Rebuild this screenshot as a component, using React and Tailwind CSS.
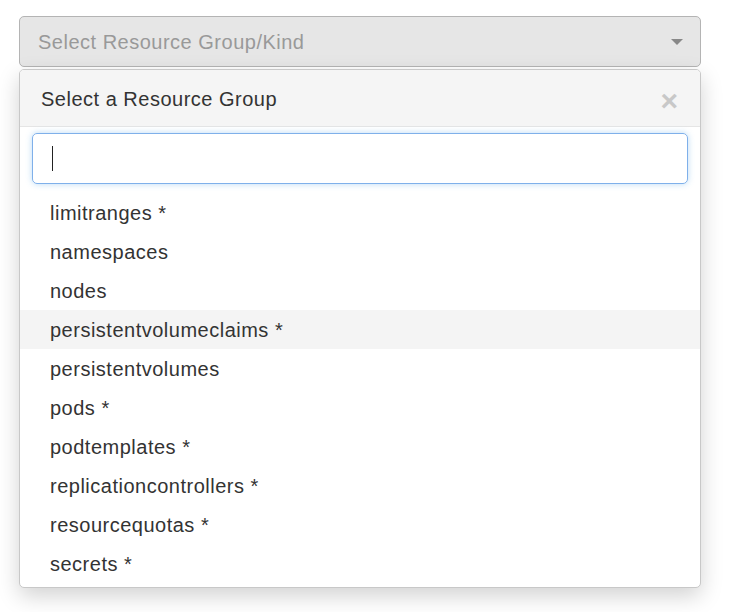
const KINDS = [
  'limitranges *',
  'namespaces',
  'nodes',
  'persistentvolumeclaims *',
  'persistentvolumes',
  'pods *',
  'podtemplates *',
  'replicationcontrollers *',
  'resourcequotas *',
  'secrets *',
]

export default function App() {
  return (
    <div className="min-h-[612px] bg-white pt-[16px] pl-[19px] w-[701px] font-['Liberation_Sans',Arial,sans-serif]">
      {/* Select trigger */}
      <div className="h-[51px] flex items-center justify-between rounded-[5px] border border-[#b4b4b4] bg-[#e6e6e6] pl-[18px] pr-[17px]">
        <span className="text-[20px] text-[#999] tracking-[0.5px] mt-[1px]">Select Resource Group/Kind</span>
        <span className="w-0 h-0 border-l-[6px] border-r-[6px] border-t-[6px] border-l-transparent border-r-transparent border-t-[#888] mt-[1px]" />
      </div>

      {/* Dropdown panel */}
      <div className="mt-[2px] rounded-[5px] border border-[#c8c8c8] bg-white shadow-[0_8px_22px_rgba(0,0,0,0.18)] overflow-hidden">
        <div className="h-[57px] flex items-center justify-between bg-[#f5f5f5] border-b border-[#e5e5e5] pl-[21px] pr-[22px]">
          <span className="text-[20px] text-[#333] tracking-[0.5px] mt-[2px]">Select a Resource Group</span>
          <span className="text-[30px] font-bold leading-none text-[#c8c8c8] mt-[6px]">×</span>
        </div>
        <div className="px-[12px] pt-[6px] pb-[9px]">
          <div className="h-[51px] rounded-[5px] border border-[#7fb0ea] shadow-[0_0_6px_rgba(102,175,233,0.45)] flex items-center pl-[19px]">
            <span className="w-px h-[25px] bg-[#222]" />
          </div>
        </div>
        <ul className="pb-[4px]">
          {KINDS.map((k, i) => (
            <li
              key={k}
              className={`h-[39px] flex items-center pl-[30px] text-[20px] text-[#333] tracking-[0.5px] ${i === 3 ? 'bg-[#f4f4f4]' : ''}`}
            >
              <span className="mt-[1px]">{k}</span>
            </li>
          ))}
        </ul>
      </div>
    </div>
  )
}
